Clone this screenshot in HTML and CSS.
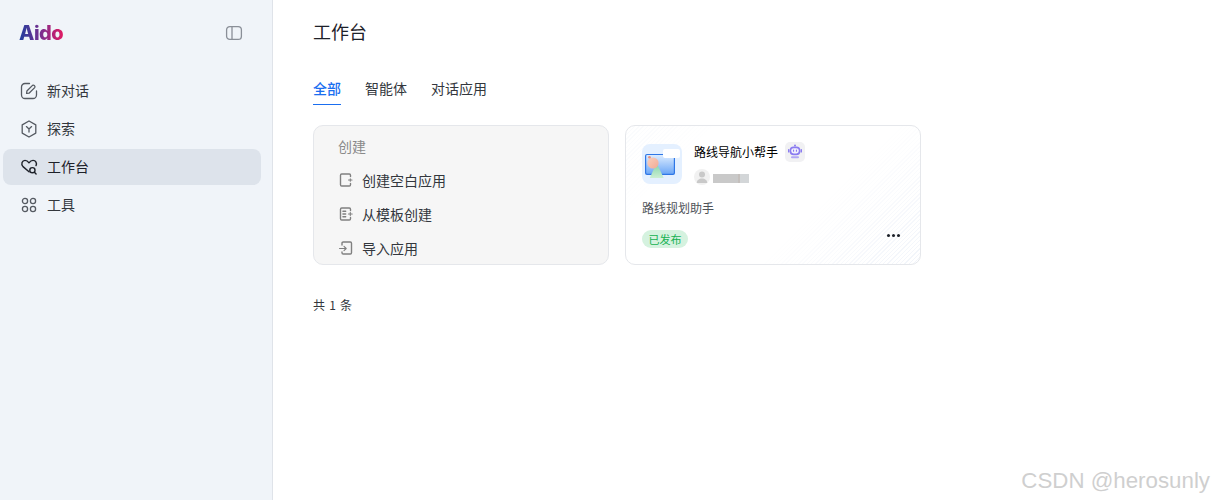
FILE: index.html
```html
<!DOCTYPE html>
<html lang="zh-CN">
<head>
<meta charset="utf-8">
<title>工作台</title>
<link rel="stylesheet" href="styles.css">
</head>
<body>
<div class="app">
  <aside class="sidebar">
    <div class="brand">
      <span class="logo">Aido</span>
      <svg class="toggle" width="18" height="18" viewBox="0 0 18 18" fill="none" stroke="#8a8f98" stroke-width="1.3"><rect x="1.6" y="2.6" width="14.8" height="12.8" rx="3.2"/><path d="M7 2.8v12.4"/></svg>
    </div>
    <nav class="nav">
      <a class="nav-item">
        <svg class="nav-icon" width="18" height="18" viewBox="0 0 18 18" fill="none" stroke="#555a62" stroke-width="1.3" stroke-linecap="round" stroke-linejoin="round"><path d="M9.5 1.5H5A3.5 3.5 0 0 0 1.500 5v8A3.500 3.500 0 0 0 5 16.500h8a3.500 3.500 0 0 0 3.500-3.500V9"/><path d="M6.600 11.400l.3-2.400 5.600-5.600a1.600 1.600 0 0 1 2.200 2.200L9 11.200z"/></svg>
        <span>新对话</span>
      </a>
      <a class="nav-item">
        <svg class="nav-icon" width="18" height="18" viewBox="0 0 18 18" fill="none" stroke="#555a62" stroke-width="1.3" stroke-linecap="round" stroke-linejoin="round"><path d="M9 1l6.800 3.900v8.200L9 17l-6.800-3.900V4.900z"/><path d="M6.400 6.600L9 9l2.600-2.400M9 9v3"/></svg>
        <span>探索</span>
      </a>
      <a class="nav-item active">
        <svg class="nav-icon" width="18" height="18" viewBox="0 0 18 18" fill="none" stroke="#1d2129" stroke-width="1.4" stroke-linecap="round" stroke-linejoin="round"><path d="M9 13.800L3 8.600C.6 6 2.200 2.400 5 2.400c1.700 0 3 1 4 2.400 1-1.400 2.400-2.400 4-2.400 2.800 0 4.200 3 3 5.200"/><circle cx="12.400" cy="12.200" r="2.600"/><path d="M14.400 14.200l1.700 1.700"/></svg>
        <span>工作台</span>
      </a>
      <a class="nav-item">
        <svg class="nav-icon" width="18" height="18" viewBox="0 0 18 18" fill="none" stroke="#555a62" stroke-width="1.3"><circle cx="5" cy="5" r="2.600"/><circle cx="13" cy="5" r="2.600"/><circle cx="5" cy="13" r="2.600"/><circle cx="13" cy="13" r="2.600"/></svg>
        <span>工具</span>
      </a>
    </nav>
  </aside>
  <main class="main">
    <h1 class="title"><span>工作台</span></h1>
    <div class="tabs">
      <span class="tab current">全部</span>
      <span class="tab">智能体</span>
      <span class="tab">对话应用</span>
    </div>
    <div class="cards">
      <section class="card create">
        <div class="create-title">创建</div>
        <div class="create-row">
          <svg width="16" height="16" viewBox="0 0 16 16" fill="none" stroke="#808080" stroke-width="1.4" stroke-linecap="round"><path d="M12.500 4.500V3.200A1.200 1.200 0 0 0 11.300 2H3.700a1.200 1.200 0 0 0-1.200 1.200v9.600A1.200 1.200 0 0 0 3.700 14h7.600a1.200 1.200 0 0 0 1.200-1.200v-1.300"/><path d="M10.500 8h3.500M12.300 6.800v2.400" stroke-width="1.100"/></svg>
          <span>创建空白应用</span>
        </div>
        <div class="create-row">
          <svg width="16" height="16" viewBox="0 0 16 16" fill="none" stroke="#808080" stroke-width="1.4" stroke-linecap="round"><path d="M12.500 4.500V3.200A1.200 1.200 0 0 0 11.300 2H3.700a1.200 1.200 0 0 0-1.200 1.200v9.600A1.200 1.200 0 0 0 3.700 14h7.600a1.200 1.200 0 0 0 1.200-1.200v-1.300"/><path d="M5 5.200h2.600M5 8h2.600M5 10.800h2.600" stroke-width="1.600"/><path d="M10.400 8h3.800M12.300 6.400v3.200" stroke-width="1.100"/></svg>
          <span>从模板创建</span>
        </div>
        <div class="create-row">
          <svg width="16" height="16" viewBox="0 0 16 16" fill="none" stroke="#808080" stroke-width="1.4" stroke-linecap="round" stroke-linejoin="round"><path d="M4 5V3.200A1.200 1.200 0 0 1 5.200 2h7.100a1.200 1.200 0 0 1 1.200 1.200v9.600a1.200 1.200 0 0 1-1.200 1.200H5.200A1.200 1.200 0 0 1 4 12.800V12"/><path d="M1.500 8.500h6.600M6 6.300l2.200 2.200L6 10.700" stroke-width="1.100"/></svg>
          <span>导入应用</span>
        </div>
      </section>
      <section class="card app-card">
        <div class="app-head">
          <div class="app-icon">
            <svg width="40" height="40" viewBox="0 0 40 40">
              <defs>
                <linearGradient id="folder" x1="0" y1="0" x2="0" y2="1"><stop offset="0" stop-color="#dcecff"/><stop offset="1" stop-color="#6ea8f7"/></linearGradient>
                <linearGradient id="tree" x1="0" y1="0" x2="0" y2="1"><stop offset="0" stop-color="#7fd4a8"/><stop offset="1" stop-color="#cceed3"/></linearGradient>
                <linearGradient id="ball" x1="0" y1="0" x2="1" y2="1"><stop offset="0" stop-color="#f8d0bd"/><stop offset="1" stop-color="#f2a995"/></linearGradient>
              </defs>
              <rect x="3" y="10" width="30" height="21" rx="2" fill="#2f77e6"/>
              <rect x="4.200" y="11" width="27.600" height="18.800" rx="1" fill="url(#folder)"/>
              <rect x="21" y="5" width="17" height="9" rx="2" fill="#fff"/>
              <path d="M14.700 19l7 15H7.700z" fill="url(#tree)"/>
              <circle cx="11" cy="19" r="5.600" fill="url(#ball)"/>
              <circle cx="7.500" cy="13.200" r="1.300" fill="#ee8f78"/>
            </svg>
          </div>
          <div class="app-meta">
            <div class="app-name-row">
              <span class="app-name">路线导航小帮手</span>
              <span class="robot">
                <svg width="16" height="16" viewBox="0 0 16 16"><circle cx="8" cy="1.600" r="1" fill="#8a7bf0"/><rect x="2.600" y="2.600" width="10.800" height="8.600" rx="4" fill="#8a7bf0"/><rect x="4.200" y="4.200" width="7.600" height="5.200" rx="2.400" fill="#f1effd"/><rect x="6" y="5.400" width="1.100" height="2.400" rx=".5" fill="#8a7bf0"/><rect x="8.900" y="5.400" width="1.100" height="2.400" rx=".5" fill="#8a7bf0"/><rect x="1" y="5" width="1.400" height="3.600" rx=".7" fill="#8a7bf0"/><rect x="13.600" y="5" width="1.400" height="3.600" rx=".7" fill="#8a7bf0"/><path d="M5 12.200h6a1 1 0 0 1 0 2H5a1 1 0 0 1 0-2z" fill="#b0a6f5"/></svg>
              </span>
            </div>
            <div class="owner">
              <span class="avatar">
                <svg width="16" height="16" viewBox="0 0 16 16" fill="#c9c9c9"><circle cx="8" cy="5.400" r="3"/><path d="M2.800 14c0-3 2.300-4.600 5.200-4.600s5.200 1.600 5.200 4.600z"/></svg>
              </span>
              <span class="blur-name"></span>
            </div>
          </div>
        </div>
        <p class="app-desc">路线规划助手</p>
        <div class="app-foot">
          <span class="badge">已发布</span>
          <span class="more"><i></i><i></i><i></i></span>
        </div>
      </section>
    </div>
    <div class="total">共 1 条</div>
  </main>
</div>
<div class="watermark">CSDN @herosunly</div>
</body>
</html>
```
FILE: styles.css
```css
* { box-sizing: border-box; }
html, body { margin: 0; height: 100%; background: #fff; }
body {
  font-family: "Noto Sans CJK SC", "Liberation Sans", sans-serif;
  font-size: 14px;
  color: #1d2129;
  overflow: hidden;
}
.app { display: flex; height: 500px; }
.sidebar {
  width: 273px;
  flex: none;
  background: #f0f4f9;
  border-right: 1px solid #dfe3e9;
  padding: 0 11px 0 3px;
}
.brand {
  display: flex;
  align-items: center;
  justify-content: space-between;
  height: 66px;
  padding: 0 18px 0 16px;
}
.logo {
  font-family: "Inter", "Liberation Sans", sans-serif;
  font-size: 20px;
  font-weight: 800;
  line-height: 24px;
  letter-spacing: -0.5px;
  background: linear-gradient(90deg, #1f3f9e 0%, #7a2f8f 50%, #e01a63 100%);
  -webkit-background-clip: text;
  background-clip: text;
  color: transparent;
}
.nav { display: flex; flex-direction: column; gap: 2px; padding-top: 7px; }
.nav-item {
  display: flex;
  align-items: center;
  gap: 9px;
  height: 36px;
  padding: 0 17px;
  border-radius: 8px;
  color: #33373d;
}
.nav-item span { margin-bottom: 2px; }
.nav-item.active { background: #dde3eb; color: #1d2129; }
.nav-icon { flex: none; }
.main { flex: 1; padding: 0 40px; min-width: 0; }
.title {
  margin: 0;
  height: 64px;
  display: flex;
  align-items: center;
  font-size: 18px;
  font-weight: 400;
  color: #1d2129;
}
.title span { margin-bottom: 2px; }
.tabs {
  display: flex;
  gap: 24px;
  margin-top: 9px;
  height: 32px;
}
.tab {
  height: 32px;
  line-height: 30px;
  color: #33373d;
}
.tab.current {
  color: #1a6ef0;
  font-weight: 500;
  border-bottom: 1px solid #1a6ef0;
}
.cards {
  display: grid;
  grid-template-columns: 296px 296px;
  gap: 16px;
  margin-top: 20px;
}
.card {
  height: 140px;
  border: 1px solid #e5e7eb;
  border-radius: 10px;
  overflow: hidden;
}
.create {
  background: #f6f6f6;
  padding: 9px 0 0 24px;
}
.create-title { color: #8a8a8a; line-height: 22px; height: 22px; }
.create-row {
  display: flex;
  align-items: center;
  gap: 8px;
  height: 34px;
  color: #33373d;
}
.create-row span { margin-bottom: 1px; }
.create-title + .create-row { margin-top: 6px; }
.create-row svg { flex: none; }
.app-card {
  padding: 18px 16px 0;
  background:
    linear-gradient(135deg, rgba(255,255,255,.6) 0, #fff 22%, #fff 62%, rgba(255,255,255,0) 100%),
    repeating-linear-gradient(135deg, rgba(170,190,225,.16) 0 1px, transparent 1px 3px),
    #fff;
}
.app-head { display: flex; gap: 12px; }
.app-icon {
  width: 40px;
  height: 40px;
  flex: none;
  border-radius: 8px;
  background: #e4f0ff;
  overflow: hidden;
}
.app-icon svg { display: block; }
.app-meta { min-width: 0; margin-top: -2px; }
.app-name-row { display: flex; align-items: center; gap: 7px; height: 20px; }
.app-name { font-size: 12px; font-weight: 400; color: #000; line-height: 20px; }
.robot {
  width: 20px;
  height: 20px;
  border-radius: 5px;
  background: #f1f1f3;
  display: flex;
  align-items: center;
  justify-content: center;
}
.owner { display: flex; align-items: center; gap: 3px; margin-top: 7px; height: 16px; }
.avatar {
  width: 16px;
  height: 16px;
  border-radius: 50%;
  background: #f1f1f1;
  display: block;
  overflow: hidden;
}
.avatar svg { display: block; }
.blur-name {
  width: 36px;
  height: 9px;
  margin-top: 2px;
  filter: blur(.5px);
  background: linear-gradient(90deg, #c9c9c9 0 70%, #c4bfbc 70% 75%, #d3d6d8 75%);
}
.app-desc { margin: 14px 0 0; font-size: 12px; line-height: 18px; color: #4e5258; }
.app-foot {
  display: flex;
  align-items: center;
  justify-content: space-between;
  margin-top: 13px;
  height: 18px;
}
.badge {
  width: 46px;
  height: 18px;
  border-radius: 9px;
  background: #d5f2df;
  color: #14b151;
  font-size: 11px;
  line-height: 18px;
  text-align: center;
}
.more { display: flex; gap: 2px; margin-right: 4px; margin-top: -8px; }
.more i { width: 3px; height: 3px; border-radius: 50%; background: #1d2129; display: block; }
.total { margin-top: 31px; font-size: 12px; line-height: 18px; word-spacing: 1.5px; color: #33373d; }
.watermark {
  position: absolute;
  right: 4px;
  bottom: 4px;
  font-family: "Liberation Sans", sans-serif;
  font-size: 22.3px;
  line-height: 30px;
  color: #cfcfcf;
}
```
